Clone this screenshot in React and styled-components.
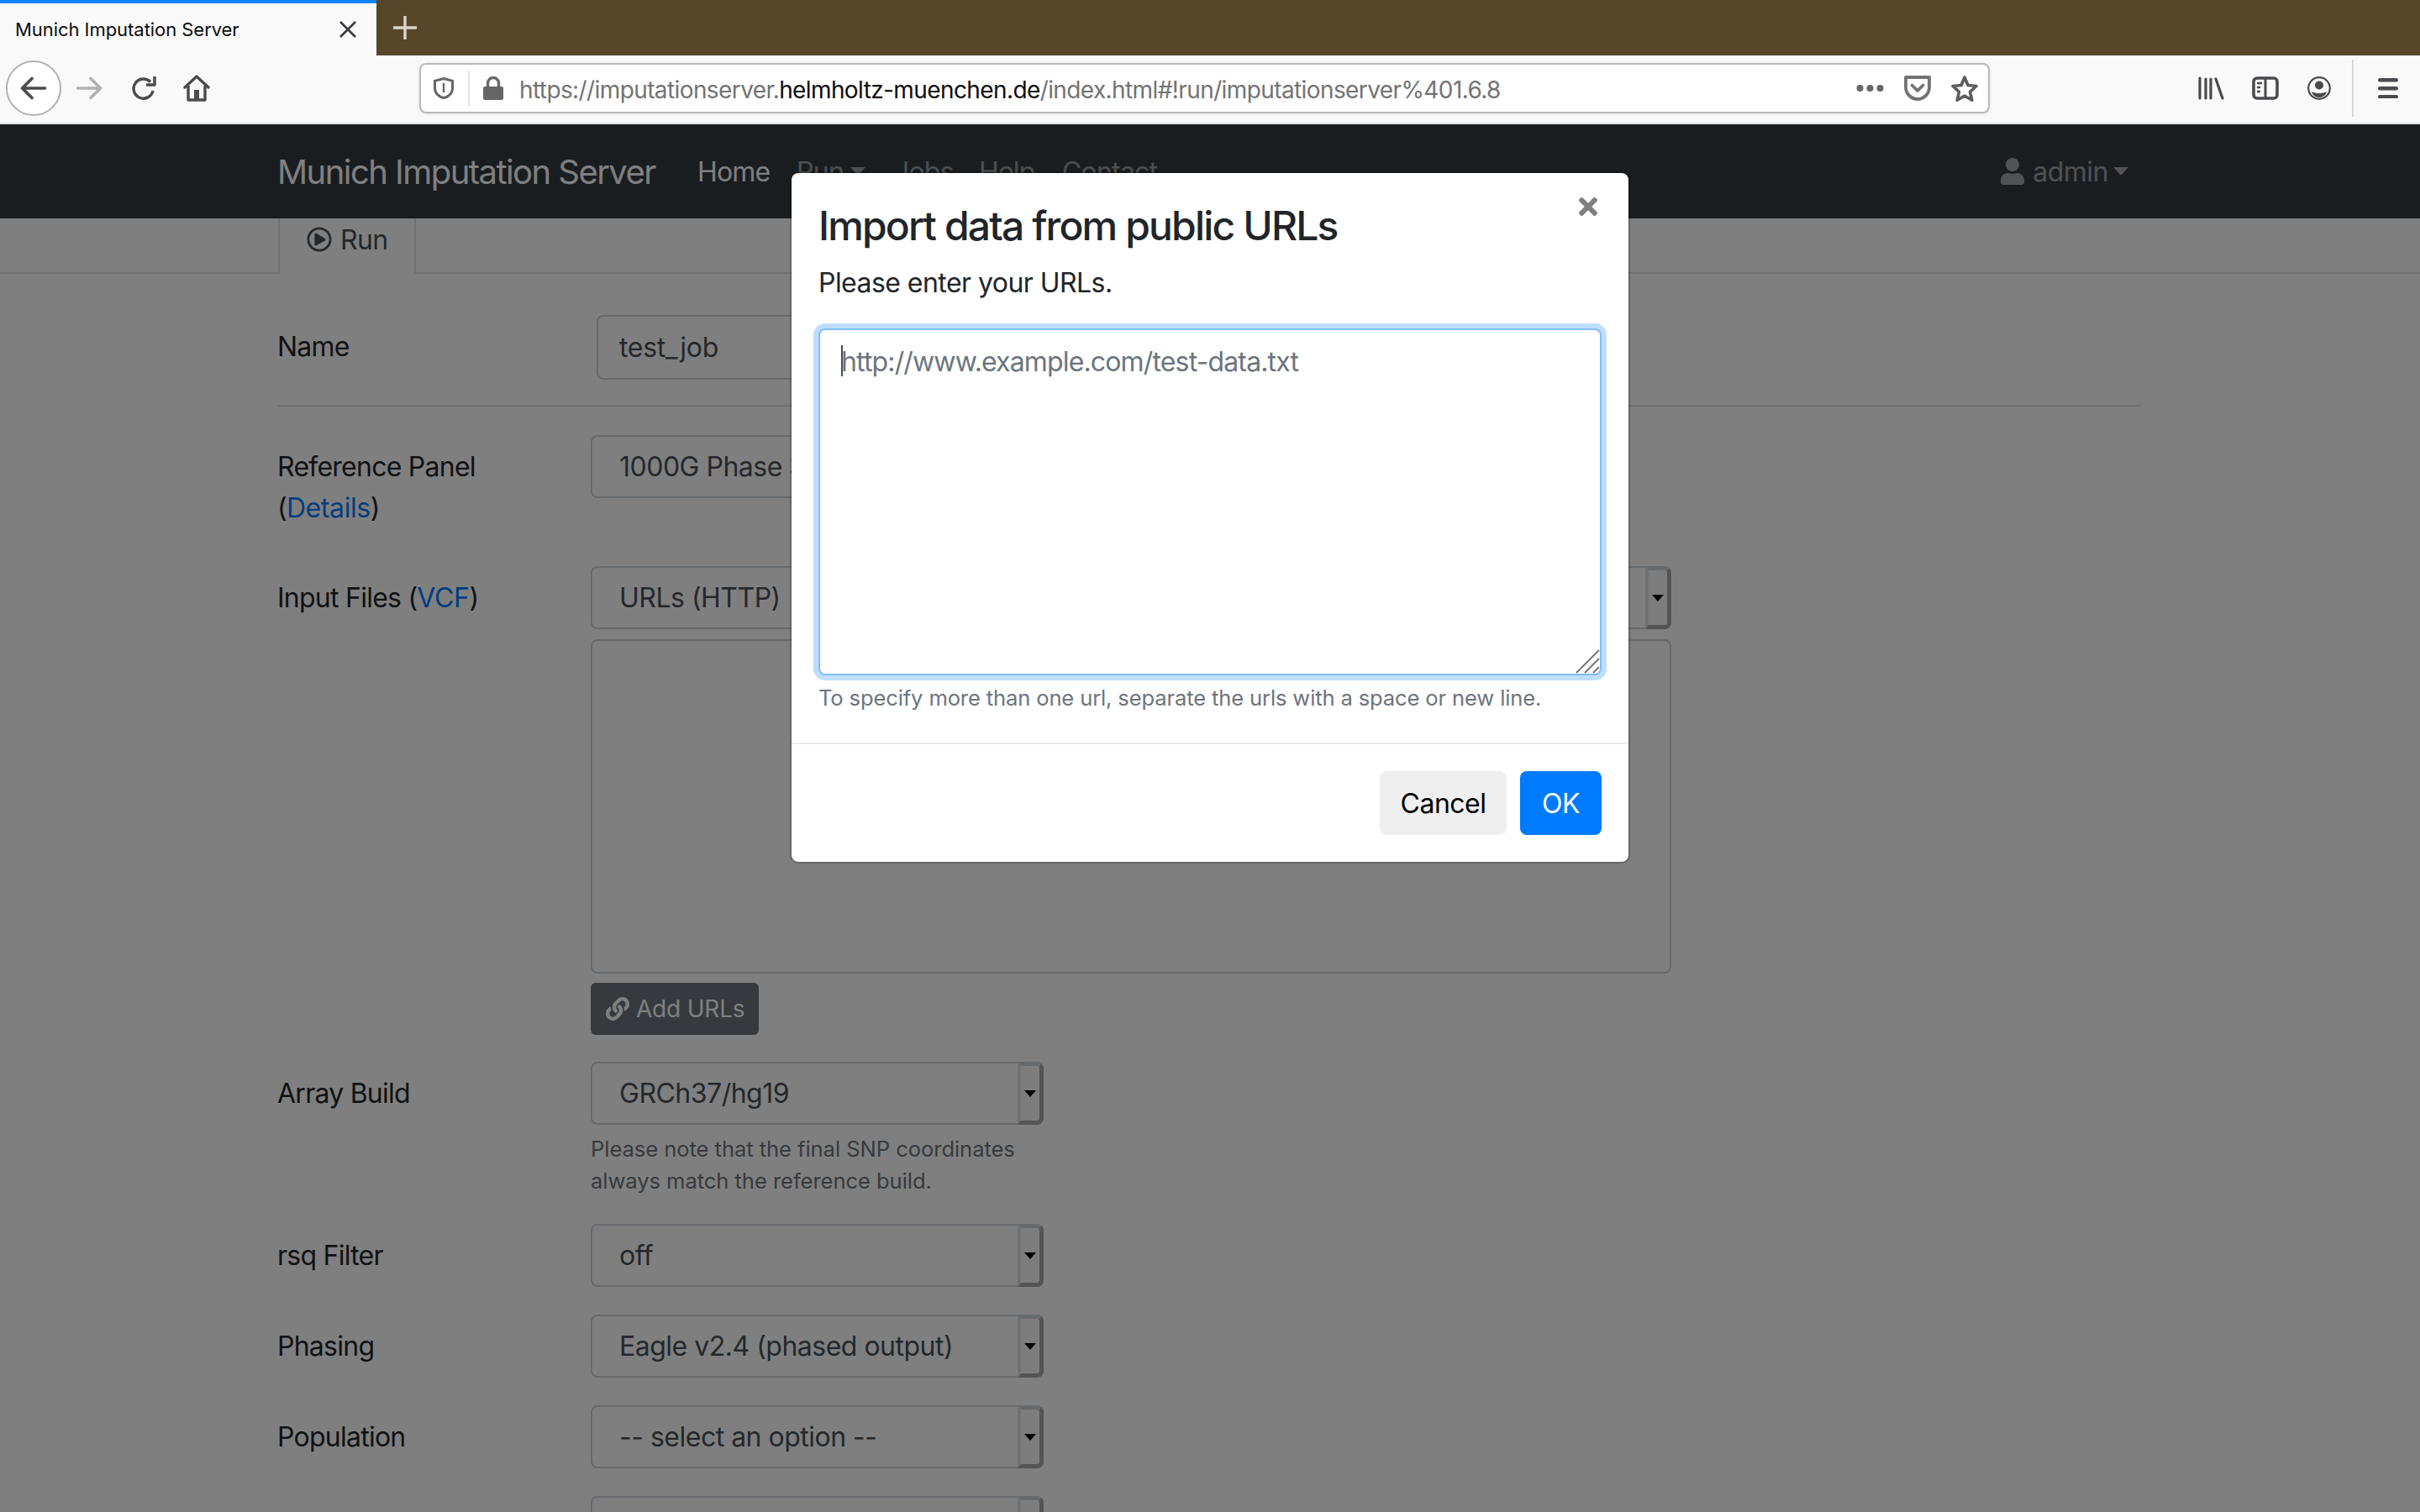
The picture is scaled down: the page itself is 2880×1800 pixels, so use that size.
import React from 'react'
import styled, { createGlobalStyle } from 'styled-components'
import { FaLink, FaRegPlayCircle, FaUser, FaTimes } from 'react-icons/fa'

const GlobalStyle = createGlobalStyle`
  html, body {
    margin: 0;
    padding: 0;
    width: 2880px;
    height: 1800px;
    overflow: hidden;
    background: #fff;
  }
  * {
    box-sizing: border-box;
  }
  body {
    font-family: Inter, "Liberation Sans", sans-serif;
    color: #212529;
  }
`

const Page = styled.div`
  display: flex;
  flex-direction: column;
  width: 2880px;
  height: 1800px;
  overflow: hidden;
`

const TabStrip = styled.div`
  display: flex;
  align-items: stretch;
  height: 66px;
  flex: none;
  background: #56472a;
`

const Tab = styled.div`
  display: flex;
  align-items: center;
  justify-content: space-between;
  width: 448px;
  padding: 0 23px 0 18px;
  background: #f9f9fa;
  border-top: 4px solid #0a84ff;
  font-size: 22px;
  letter-spacing: -0.05px;
  color: #0c0c0d;
`

const NewTab = styled.div`
  display: flex;
  align-items: center;
  margin-left: 20px;
`

const Toolbar = styled.div`
  display: flex;
  align-items: center;
  flex: none;
  height: 82px;
  padding-left: 7px;
  padding-bottom: 2px;
  background: #f9f9fa;
  border-bottom: 2px solid #e2e2e3;
`

const BackCircle = styled.div`
  display: flex;
  align-items: center;
  justify-content: center;
  width: 66px;
  height: 66px;
  border: 2px solid #b1b1b3;
  border-radius: 50%;
  background: #fff;
`

const Slot = styled.div`
  display: flex;
  align-items: center;
  justify-content: center;
  flex: none;
  width: ${p => p.$w || 64}px;
  margin-left: ${p => p.$ml || 0}px;
`

const UrlBar = styled.div`
  display: flex;
  align-items: center;
  flex: none;
  width: 1869px;
  height: 60px;
  margin-left: 234px;
  padding: 0 12px 0 15px;
  background: #fff;
  border: 2px solid #b9b9bb;
  border-radius: 8px;
  box-shadow: 0 1px 4px rgba(0, 0, 0, 0.08);
`

const UrlSep = styled.div`
  width: 2px;
  height: 42px;
  margin: 0 16px 0 17px;
  background: #e3e3e4;
`

const UrlText = styled.div`
  margin-left: 19px;
  padding-top: 3px;
  font-size: 28px;
  letter-spacing: -0.6px;
  color: #737373;
  white-space: nowrap;

  b {
    font-weight: 400;
    color: #0c0c0d;
  }
`

const UrlActions = styled.div`
  display: flex;
  align-items: center;
  gap: 24px;
  margin-left: auto;
`

const ToolbarDivider = styled.div`
  width: 2px;
  height: 68px;
  margin-left: 7px;
  background: #d9d9da;
`

const Content = styled.div`
  position: relative;
  flex: 1;
  background: #fff;
`

const Navbar = styled.nav`
  display: flex;
  align-items: center;
  height: 112px;
  padding: 0 347px 0 330px;
  background: #343a40;
`

const Brand = styled.div`
  width: 500px;
  font-size: 40px;
  letter-spacing: -1.55px;
  color: #fff;
`

const NavLink = styled.div`
  display: flex;
  align-items: center;
  width: ${p => p.$w}px;
  font-size: 32px;
  letter-spacing: -0.8px;
  color: ${p => (p.$active ? '#fff' : 'rgba(255, 255, 255, 0.5)')};
`

const Caret = styled.span`
  width: 0;
  height: 0;
  margin-left: ${p => p.$ml || 0}px;
  border-top: 10px solid currentColor;
  border-left: 9px solid transparent;
  border-right: 9px solid transparent;
`

const UserMenu = styled.div`
  display: flex;
  align-items: center;
  gap: 8px;
  margin-left: auto;
  font-size: 32px;
  letter-spacing: -0.5px;
  color: rgba(255, 255, 255, 0.55);
`

const TabsBar = styled.div`
  display: flex;
  height: 66px;
  padding-left: 331px;
  border-bottom: 2px solid #dee2e6;
`

const RunTab = styled.div`
  display: flex;
  align-items: center;
  gap: 10px;
  width: 164px;
  height: 66px;
  padding: 0 0 16px 32px;
  background: #fff;
  border: 2px solid #dee2e6;
  border-width: 0 2px;
  font-size: 32px;
  letter-spacing: -0.6px;
  color: #495057;
`

const Form = styled.div`
  padding: 49px 332px 0 330px;
`

const Row = styled.div`
  display: grid;
  grid-template-columns: ${p => p.$label || 373}px 1fr;
  align-items: start;
  margin-bottom: ${p => p.$mb || 33}px;
`

const Label = styled.div`
  padding-top: 13px;
  font-size: 32px;
  line-height: 49px;
  letter-spacing: -0.75px;
  color: #212529;

  a {
    letter-spacing: -0.4px;
    color: #007bff;
  }
`

const TextInput = styled.div`
  display: flex;
  align-items: center;
  width: 900px;
  height: 77px;
  padding-left: 25px;
  border: 2px solid #ced4da;
  border-radius: 8px;
  font-size: 32px;
  letter-spacing: -0.3px;
  color: #495057;
`

const Rule = styled.hr`
  height: 2px;
  margin: 0 0 34px;
  border: 0;
  background: #dee2e6;
`

const SelectBox = styled.div`
  display: flex;
  align-items: center;
  width: ${p => p.$width || 539}px;
  height: 75px;
  padding-left: 32px;
  border: 2px solid #ced4da;
  border-radius: 8px;
  font-size: 32px;
  letter-spacing: -0.5px;
  color: #495057;
`

const SelectArrow = styled.div`
  display: flex;
  align-items: center;
  justify-content: center;
  flex: none;
  align-self: stretch;
  width: 31px;
  margin: -2px -2px -2px auto;
  background: #fbfbfb;
  border-style: solid;
  border-width: 5px 5px 5px 4px;
  border-color: #ced4da #a8a8a8 #a8a8a8 #dee2e6;
  border-radius: 0 8px 8px 0;

  &::after {
    content: '';
    border-top: 8px solid #000;
    border-left: 7px solid transparent;
    border-right: 7px solid transparent;
  }
`

const FileBox = styled.div`
  width: 1286px;
  height: 398px;
  margin-top: 12px;
  border: 2px solid #ced4da;
  border-radius: 8px;
`

const AddButton = styled.div`
  display: flex;
  align-items: center;
  gap: 8px;
  width: 200px;
  height: 62px;
  margin-top: 11px;
  padding-left: 18px;
  background: #6c757d;
  border-radius: 6px;
  font-size: 28px;
  letter-spacing: -0.2px;
  color: #fff;
`

const HelpText = styled.div`
  width: 539px;
  margin-top: 10px;
  font-size: 25.6px;
  line-height: 38px;
  letter-spacing: -0.07px;
  color: #6c757d;
`

const Backdrop = styled.div`
  position: absolute;
  inset: 0;
  display: flex;
  justify-content: center;
  align-items: flex-start;
  background: rgba(0, 0, 0, 0.5);
`

const Modal = styled.div`
  position: relative;
  width: 1000px;
  margin-top: 56px;
  background: #fff;
  border: 2px solid rgba(0, 0, 0, 0.2);
  background-clip: padding-box;
  border-radius: 10px;
`

const ModalBody = styled.div`
  padding: 34px 32px 35px;
`

const CloseButton = styled.div`
  position: absolute;
  top: 24px;
  right: 32px;
  display: flex;
  color: #7f7f7f;
`

const Title = styled.h4`
  margin: 0;
  font-size: 48px;
  font-weight: 500;
  line-height: 58px;
  letter-spacing: -1.85px;
  color: #212529;
`

const Prompt = styled.p`
  margin: 15px 0 30px;
  font-size: 32px;
  line-height: 48px;
  letter-spacing: -0.55px;
  color: #212529;
`

const FieldWrap = styled.div`
  position: relative;
  display: flex;
  width: 932px;
  height: 413px;
`

const UrlsField = styled.textarea`
  width: 100%;
  height: 100%;
  padding: 14px 25px;
  resize: none;
  outline: none;
  border: 2px solid #80bdff;
  border-radius: 8px;
  box-shadow: 0 0 0 6px #bfdeff;
  font-family: inherit;
  font-size: 32px;
  line-height: 48px;
  letter-spacing: -0.85px;
  color: #495057;

  &::placeholder {
    color: #6c757d;
    opacity: 1;
  }
`

const TextCaret = styled.span`
  position: absolute;
  top: 20px;
  left: 27px;
  width: 2px;
  height: 37px;
  background: #495057;
`

const ResizeGrip = styled.svg`
  position: absolute;
  right: 2px;
  bottom: 2px;
`

const FieldHelp = styled.small`
  display: block;
  margin-top: 9px;
  font-size: 25.6px;
  line-height: 36px;
  letter-spacing: -0.15px;
  color: #6c757d;
`

const ModalFooter = styled.div`
  display: flex;
  justify-content: flex-end;
  gap: 16px;
  padding: 32px 32px 32px;
  border-top: 2px solid #e9ecef;
`

const Button = styled.div`
  display: flex;
  align-items: center;
  justify-content: center;
  width: ${p => p.$w}px;
  height: 76px;
  border-radius: 8px;
  background: ${p => (p.$primary ? '#007bff' : '#efefef')};
  color: ${p => (p.$primary ? '#fff' : '#000')};
  font-size: 32px;
  letter-spacing: -0.5px;
`

const Close = () => (
  <svg width="22" height="20" viewBox="0 0 22 20" fill="none" stroke="#3b3b3f" strokeWidth="2.6">
    <path d="M2 1l18 18M20 1L2 19" />
  </svg>
)

const Plus = () => (
  <svg width="28" height="28" viewBox="0 0 28 28" fill="none" stroke="#d9d5ca" strokeWidth="3.4">
    <path d="M14 0v28M0 14h28" />
  </svg>
)

const Arrow = ({ color, flip }) => (
  <svg
    width="32"
    height="28"
    viewBox="0 0 32 28"
    fill="none"
    stroke={color}
    strokeWidth="3.6"
    strokeLinecap="round"
    strokeLinejoin="round"
    transform={flip ? 'scale(-1 1)' : undefined}
  >
    <path d="M2.5 14h27M14 2.5L2.5 14 14 25.5" />
  </svg>
)

const Reload = () => (
  <svg width="32" height="28" viewBox="0 0 32 28" fill="none" stroke="#4a4a4f" strokeWidth="3.4">
    <path d="M24 6.5A11.6 11.6 0 1 0 27 17" />
    <path d="M29 0v10H19" strokeLinejoin="round" />
  </svg>
)

const Home = () => (
  <svg width="32" height="32" viewBox="0 0 32 32" fill="none" stroke="#4a4a4f" strokeWidth="3.4" strokeLinejoin="round">
    <path d="M2 15L16 2l14 13" strokeLinecap="round" />
    <path d="M6 13v17h20V13" />
    <rect x="13" y="18" width="6" height="12" fill="#4a4a4f" stroke="none" />
  </svg>
)

const Shield = () => (
  <svg width="24" height="26" viewBox="0 0 24 26" fill="none" stroke="#666" strokeWidth="3">
    <path d="M12 1.5l10.5 2.8V13c0 6.5-5.5 10.5-10.5 11.5C7 23.5 1.5 19.5 1.5 13V4.300z" />
    <path d="M12 7v11" strokeWidth="2.4" />
  </svg>
)

const Lock = () => (
  <svg width="24" height="28" viewBox="0 0 24 28" fill="none">
    <path d="M5.500 13V8a6.500 6.500 0 0 1 13 0v5" stroke="#666" strokeWidth="3.4" />
    <rect y="12" width="24" height="16" rx="2" fill="#666" />
  </svg>
)

const Dots = () => (
  <svg width="33" height="10" viewBox="0 0 33 10" fill="#666">
    <circle cx="4.500" cy="5" r="4" />
    <circle cx="16.500" cy="5" r="4" />
    <circle cx="28.500" cy="5" r="4" />
  </svg>
)

const Pocket = () => (
  <svg width="32" height="30" viewBox="0 0 32 30" fill="none" stroke="#737373" strokeWidth="3.8" strokeLinecap="round" strokeLinejoin="round">
    <path d="M2 2h28v12c0 8-7 14-14 14S2 22 2 14z" />
    <path d="M9.500 11.500l6.500 6.500 6.500-6.500" />
  </svg>
)

const Star = () => (
  <svg width="32" height="32" viewBox="0 0 32 32" fill="none" stroke="#5c5c5f" strokeWidth="3.6" strokeLinejoin="round">
    <path d="M16 3l4 9.500 10 1-7.500 6.800 2.300 10L16 25l-8.800 5.300 2.300-10L2 13.500l10-1z" />
  </svg>
)

const Library = () => (
  <svg width="32" height="28" viewBox="0 0 32 28" fill="none" stroke="#4a4a4f" strokeWidth="3.2" strokeLinecap="round">
    <path d="M2 2v24M9 3v23M15 3v23M21 3l8 23" />
  </svg>
)

const Sidebar = () => (
  <svg width="32" height="28" viewBox="0 0 32 28" fill="none" stroke="#4a4a4f">
    <rect x="2" y="2" width="28" height="24" rx="4" strokeWidth="3.6" />
    <path d="M16 2v24" strokeWidth="3" />
    <path d="M6 8h6M6 13h4M6 18h4" strokeWidth="2.4" />
  </svg>
)

const Account = () => (
  <svg width="28" height="28" viewBox="0 0 28 28">
    <circle cx="14" cy="14" r="12.800" fill="none" stroke="#4a4a4f" strokeWidth="2.2" />
    <circle cx="14" cy="10.500" r="5" fill="#4a4a4f" />
    <path d="M5 18c3 1.500 5.500 2 9 2s6-.5 9-2c-1 4.500-5 7-9 7s-8-2.500-9-7z" fill="#4a4a4f" />
  </svg>
)

const Hamburger = () => (
  <svg width="24" height="24" viewBox="0 0 24 24" fill="#4a4a4f">
    <rect width="24" height="4.500" rx="2.200" />
    <rect y="10" width="24" height="4.500" rx="2.200" />
    <rect y="20" width="24" height="4.500" rx="2.200" />
  </svg>
)

const Select = ({ children, width }) => (
  <SelectBox $width={width}>
    {children}
    <SelectArrow />
  </SelectBox>
)

export default function App() {
  return (
    <Page>
      <GlobalStyle />
      <TabStrip>
        <Tab>
          Munich Imputation Server
          <Close />
        </Tab>
        <NewTab>
          <Plus />
        </NewTab>
      </TabStrip>
      <Toolbar>
        <BackCircle>
          <Arrow color="#4a4a4f" />
        </BackCircle>
        <Slot $w={66}>
          <Arrow color="#b1b1b3" flip />
        </Slot>
        <Slot $w={64}>
          <Reload />
        </Slot>
        <Slot $w={62}>
          <Home />
        </Slot>
        <UrlBar>
          <Shield />
          <UrlSep />
          <Lock />
          <UrlText>
            https://imputationserver.<b>helmholtz-muenchen.de</b>/index.html#!run/imputationserver%401.6.8
          </UrlText>
          <UrlActions>
            <Dots />
            <Pocket />
            <Star />
          </UrlActions>
        </UrlBar>
        <Slot $ml={232}>
          <Library />
        </Slot>
        <Slot>
          <Sidebar />
        </Slot>
        <Slot>
          <Account />
        </Slot>
        <ToolbarDivider />
        <Slot $ml={9}>
          <Hamburger />
        </Slot>
      </Toolbar>
      <Content>
        <Navbar>
          <Brand>Munich Imputation Server</Brand>
          <NavLink $w={118} $active>Home</NavLink>
          <NavLink $w={116}>Run<Caret $ml={8} /></NavLink>
          <NavLink $w={101}>Jobs</NavLink>
          <NavLink $w={99}>Help</NavLink>
          <NavLink $w={120}>Contact</NavLink>
          <UserMenu>
            <FaUser size={32} />
            admin
            <Caret $ml={-2} />
          </UserMenu>
        </Navbar>
        <TabsBar>
          <RunTab>
            <FaRegPlayCircle size={30} />
            Run
          </RunTab>
        </TabsBar>
        <Form>
          <Row $label={380} $mb={30}>
            <Label>Name</Label>
            <TextInput>test_job</TextInput>
          </Row>
          <Rule />
          <Row $mb={45}>
            <Label>
              Reference Panel
              <br />
              (<a>Details</a>)
            </Label>
            <Select>1000G Phase 3 (Version 5)</Select>
          </Row>
          <Row $mb={32}>
            <Label>
              Input Files (<a>VCF</a>)
            </Label>
            <div>
              <Select width={1286}>URLs (HTTP)</Select>
              <FileBox />
              <AddButton>
                <FaLink size={28} />
                Add URLs
              </AddButton>
            </div>
          </Row>
          <Row $mb={32}>
            <Label>Array Build</Label>
            <div>
              <Select>GRCh37/hg19</Select>
              <HelpText>Please note that the final SNP coordinates always match the reference build.</HelpText>
            </div>
          </Row>
          <Row>
            <Label>rsq Filter</Label>
            <Select>off</Select>
          </Row>
          <Row>
            <Label>Phasing</Label>
            <Select>Eagle v2.4 (phased output)</Select>
          </Row>
          <Row>
            <Label>Population</Label>
            <Select>-- select an option --</Select>
          </Row>
          <Row>
            <Label />
            <Select />
          </Row>
        </Form>
        <Backdrop>
          <Modal>
            <CloseButton>
              <FaTimes size={32} />
            </CloseButton>
            <ModalBody>
              <Title>Import data from public URLs</Title>
              <Prompt>Please enter your URLs.</Prompt>
              <FieldWrap>
                <UrlsField placeholder="http://www.example.com/test-data.txt" />
                <TextCaret />
                <ResizeGrip width="29" height="29" viewBox="0 0 29 29" stroke="#777" strokeWidth="2" fill="none">
                  <path d="M1 28L28 1M11 28L28 11M21 28l7-7" />
                </ResizeGrip>
              </FieldWrap>
              <FieldHelp>To specify more than one url, separate the urls with a space or new line.</FieldHelp>
            </ModalBody>
            <ModalFooter>
              <Button $w={151}>Cancel</Button>
              <Button $w={97} $primary>OK</Button>
            </ModalFooter>
          </Modal>
        </Backdrop>
      </Content>
    </Page>
  )
}
